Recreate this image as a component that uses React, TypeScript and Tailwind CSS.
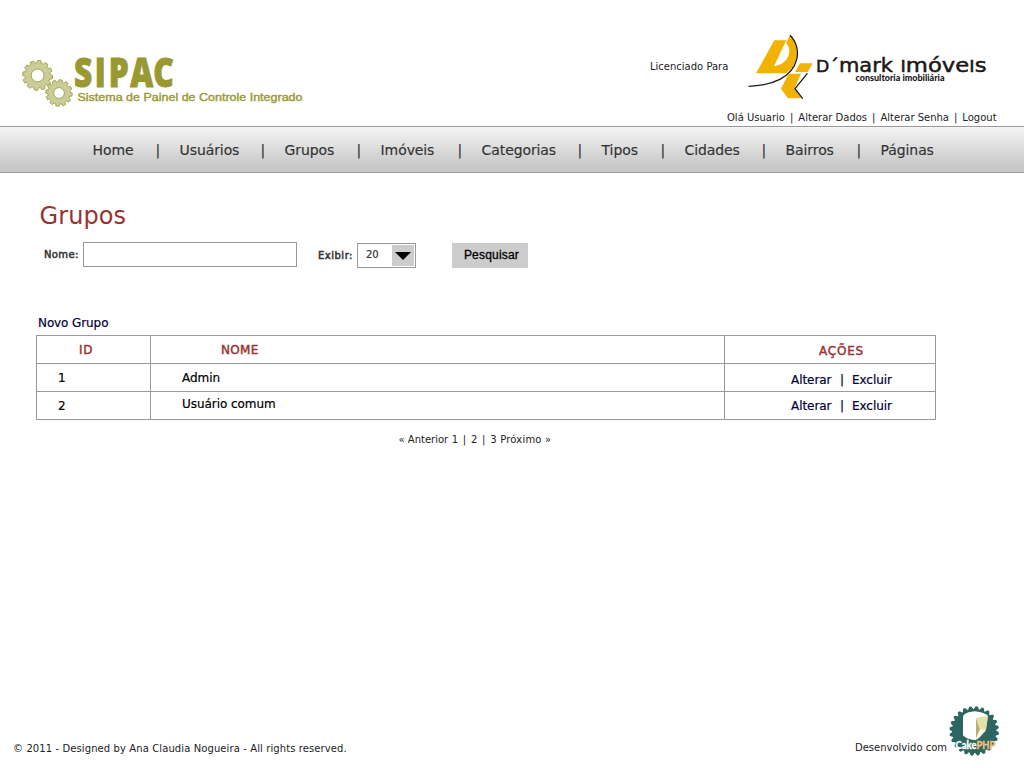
import React from "react";

function gearPath(cx: number, cy: number, outer: number, inner: number, teeth: number, phase = 0, root = 0.3, tip = 0.2): string {
  const step = (Math.PI * 2) / teeth;
  const pts: string[] = [];
  for (let i = 0; i < teeth; i++) {
    const a = i * step + phase;
    const corners: [number, number][] = [
      [inner, -root],
      [outer, -tip],
      [outer, tip],
      [inner, root],
    ];
    for (const [r, f] of corners) {
      pts.push(`${(cx + r * Math.cos(a + f * step)).toFixed(2)},${(cy + r * Math.sin(a + f * step)).toFixed(2)}`);
    }
  }
  return `M${pts.join("L")}Z`;
}

function SipacLogo() {
  return (
    <svg width="300" height="70" viewBox="10 40 300 70" className="block overflow-visible">
      <g stroke="#a0a048" strokeWidth="0.9" fill="#cccc99" strokeLinejoin="round">
        <path d={gearPath(37.6, 75.4, 15, 12.6, 12, 0.12, 0.34, 0.22)} />
        <circle cx="37.6" cy="75.4" r="6.4" fill="#fff" />
        <path d={gearPath(59, 93, 13.3, 11.1, 12, 0.12, 0.34, 0.22)} />
        <circle cx="59" cy="93" r="5.4" fill="#fff" />
      </g>
      <g transform="translate(74 87.3) scale(0.78 1)">
        <text x="0 26.5 44.5 72 101.5" y="0" fontFamily="Open Sans, sans-serif" fontWeight="800" fontSize="40.5" fill="#999933" stroke="#999933" strokeWidth="1">SIPAC</text>
      </g>
      <text x="77.5" y="101" fontFamily="Liberation Sans, sans-serif" fontSize="11.5" fill="#999933" stroke="#999933" strokeWidth="0.4" textLength="225" lengthAdjust="spacingAndGlyphs">Sistema de Painel de Controle Integrado</text>
    </svg>
  );
}

function DmarkLogo() {
  return (
    <svg width="250" height="76" viewBox="740 28 250 76" className="block">
      <g transform="translate(740 28) scale(0.33333)">
        <path fill="#f2b200" fillRule="evenodd" d="M48 136L103 37L139 37L102 115Q126 112 140 94Q151 78 147 60Q144 50 138 45L150 22Q171 46 170 82Q164 120 138 136Z" />
        <path fill="none" stroke="#1c1815" strokeWidth="4" d="M150 22C170 42 176 70 170 94C157 148 96 173 26 175" />
        <path fill="#f2b200" d="M180 106H218L203 132H165ZM146 137H183L163 182L183 211H144L123 182Z" />
        <path fill="none" stroke="#1c1815" strokeWidth="4" d="M202 136L165 182L188 212" />
      </g>
      <g fontFamily="DejaVu Sans, sans-serif" fontSize="19.5" fill="#1c1815" stroke="#1c1815" strokeWidth="0.5">
        <text x="816" y="71.7" textLength="77" lengthAdjust="spacingAndGlyphs"><tspan fontSize="16">D</tspan><tspan fontSize="18">´</tspan>mark</text>
        <text x="900.5" y="71.7" textLength="86" lengthAdjust="spacingAndGlyphs"><tspan fontSize="15.5">I</tspan>móve<tspan fontSize="15.5">I</tspan>s</text>
      </g>
      <text x="855.5" y="80.5" fontFamily="Lato, sans-serif" fontWeight="900" fontSize="9" fill="#1c1815" textLength="89" lengthAdjust="spacingAndGlyphs">consultoria imobiliária</text>
    </svg>
  );
}

function CakeLogo() {
  return (
    <svg width="52" height="52" viewBox="948 705 52 52" className="block">
      <path fill="#2b6660" d={gearPath(974.2, 731, 24.8, 22, 24, 0.1, 0.45, 0.15)} />
      <path fill="#f8f6ea" d="M963 717Q964 712 975 711.5Q985 712 988 716L985.5 731L979 738Q977 740 974 740Q966 739 963 735Z" />
      <path fill="#ffffff" d="M963 717Q964 712 975 711.5Q983 712 987 716L976 718L976 740Q966 739 963 735Z" />
      <path fill="#b8b06d" d="M976 718L980 729L976 738Z" />
      <path fill="#e6dfa6" d="M976 718L988 716L986 730L980 729Z" />
      <text x="955.5" y="748.5" fontFamily="Lato, sans-serif" fontWeight="900" fontSize="11.5" textLength="40" lengthAdjust="spacingAndGlyphs">
        <tspan fill="#ffffff" stroke="#ffffff" strokeWidth="0.3">Cake</tspan><tspan fill="#f0c080" stroke="#f0c080" strokeWidth="0.3">PHP</tspan>
      </text>
    </svg>
  );
}

const nav = [
  { label: "Home", width: "w-[63px]" },
  { label: "Usuários", width: "w-[81px]" },
  { label: "Grupos", width: "w-[72px]" },
  { label: "Imóveis", width: "w-[77px]" },
  { label: "Categorias", width: "w-[96px]" },
  { label: "Tipos", width: "w-[59px]" },
  { label: "Cidades", width: "w-[77px]" },
  { label: "Bairros", width: "w-[71px]" },
  { label: "Páginas", width: "w-[60px]" },
];

function Actions({ className }: { className: string }) {
  return (
    <div className={`flex w-[210px] pl-[66px] text-[#000033] ${className}`}>
      <a className="w-[49px]">Alterar</a>
      <span className="w-[12px]">|</span>
      <a>Excluir</a>
    </div>
  );
}

export default function App() {
  return (
    <div className="flex h-[768px] w-[1024px] flex-col overflow-hidden whitespace-nowrap bg-white font-['Verdana','DejaVu_Sans',sans-serif] text-black">
      <header className="flex h-[126px] justify-between">
        <div className="pl-[10px] pt-[40px]">
          <SipacLogo />
        </div>
        <div className="flex w-[374px] flex-col pt-[28px]">
          <div className="flex h-[83px]">
            <span className="w-[90px] pt-[32px] text-[10px] leading-[14px] text-[#222]">Licenciado Para</span>
            <DmarkLogo />
          </div>
          <div className="flex gap-[5px] pl-[77px] text-[10px] leading-[14px] text-[#222]">
            <span>Olá Usuario</span><span>|</span>
            <a>Alterar Dados</a><span>|</span>
            <a>Alterar Senha</a><span>|</span>
            <a>Logout</a>
          </div>
        </div>
      </header>

      <nav className="flex h-[47px] shrink-0 border-y border-[#999] bg-linear-to-b from-[#f5f5f5] to-[#c9c9c9] to-85% pl-[92.6px] pt-[13px] text-[14px] leading-[20px] tracking-[-0.1px] text-[#333] [-webkit-text-stroke:0.15px]">
        {nav.map((item, i) => (
          <React.Fragment key={item.label}>
            <a className={item.width}>{item.label}</a>
            {i < nav.length - 1 && <span className="w-[24px]">|</span>}
          </React.Fragment>
        ))}
      </nav>

      <main className="flex flex-1 flex-col">
        <h1 className="mt-[27px] h-[32px] pl-[39.5px] text-[24px] leading-[32px] tracking-[0.1px] text-[#993333]">Grupos</h1>
        <form className="mt-[10px] flex h-[28px] text-[10px] text-[#333]">
          <label className="w-[83px] pl-[44px] pt-[6px] leading-[14px] tracking-[0.35px] [-webkit-text-stroke:0.5px]">Nome:</label>
          <input className="h-[25px] w-[214px] border border-[#999] px-2 outline-none" />
          <label className="w-[60px] pl-[21px] pt-[7px] leading-[14px] tracking-[0.5px] [-webkit-text-stroke:0.5px]">Exibir:</label>
          <div className="mt-px flex h-[25px] w-[59px] justify-between border border-[#999] pl-[8px]">
            <span className="pt-[4px] leading-[14px] [-webkit-text-stroke:0.2px]">20</span>
            <div className="mr-px mt-px flex h-[21px] w-[22px] items-center justify-center bg-[#ccc]">
              <svg width="16" height="8" viewBox="0 0 16 8"><path d="M0 0H16L8 8Z" /></svg>
            </div>
          </div>
          <button type="button" className="ml-[36px] mt-px h-[25px] w-[76px] bg-[#ccc] pb-[2px] pl-[3px] font-['Liberation_Sans',sans-serif] text-[12px] tracking-[0.2px] text-black [-webkit-text-stroke:0.3px]">Pesquisar</button>
        </form>

        <a className="mt-[45px] h-[20px] pl-[38px] text-[12px] leading-[16px] tracking-[-0.1px] text-[#000033] [-webkit-text-stroke:0.2px]">Novo Grupo</a>
        <div className="ml-[36px] flex h-[85px] w-[900px] flex-col divide-y divide-[#999] border border-[#999] text-[12px] leading-[16px] tracking-[-0.05px] [-webkit-text-stroke:0.2px]">
          <div className="flex h-[28px] divide-x divide-[#999] text-[#993333] [-webkit-text-stroke:0.45px]">
            <div className="w-[114px] pl-[42px] pt-[6px] tracking-[0.7px]">ID</div>
            <div className="w-[574px] pl-[70px] pt-[6px] tracking-[0.3px]">NOME</div>
            <div className="w-[210px] pl-[94px] pt-[7px] tracking-[0.8px]">AÇÕES</div>
          </div>
          <div className="flex h-[28px] divide-x divide-[#999]">
            <div className="w-[114px] pl-[21px] pt-[6px]">1</div>
            <div className="w-[574px] pl-[31px] pt-[6px]">Admin</div>
            <Actions className="pt-[8px]" />
          </div>
          <div className="flex h-[27px] divide-x divide-[#999]">
            <div className="w-[114px] pl-[21px] pt-[6px]">2</div>
            <div className="w-[574px] pl-[31px] pt-[4px]">Usuário comum</div>
            <Actions className="pt-[6px]" />
          </div>
        </div>
        <div className="mt-[13px] flex gap-[3.5px] pl-[398.5px] text-[10px] leading-[14px] text-[#222]">
          <a>« Anterior</a><span className="[word-spacing:1.6px]">1 | 2 | 3</span><a className="tracking-[0.2px]">Próximo »</a>
        </div>
      </main>

      <footer className="flex h-[63px] justify-between pl-[13px] pr-[24px] text-[10px] leading-[14px] text-[#222]">
        <span className="pt-[37px] tracking-[0.1px]">© 2011 - Designed by Ana Claudia Nogueira - All rights reserved.</span>
        <div className="flex">
          <span className="w-[93px] pt-[36px]">Desenvolvido com</span>
          <CakeLogo />
        </div>
      </footer>
    </div>
  );
}
